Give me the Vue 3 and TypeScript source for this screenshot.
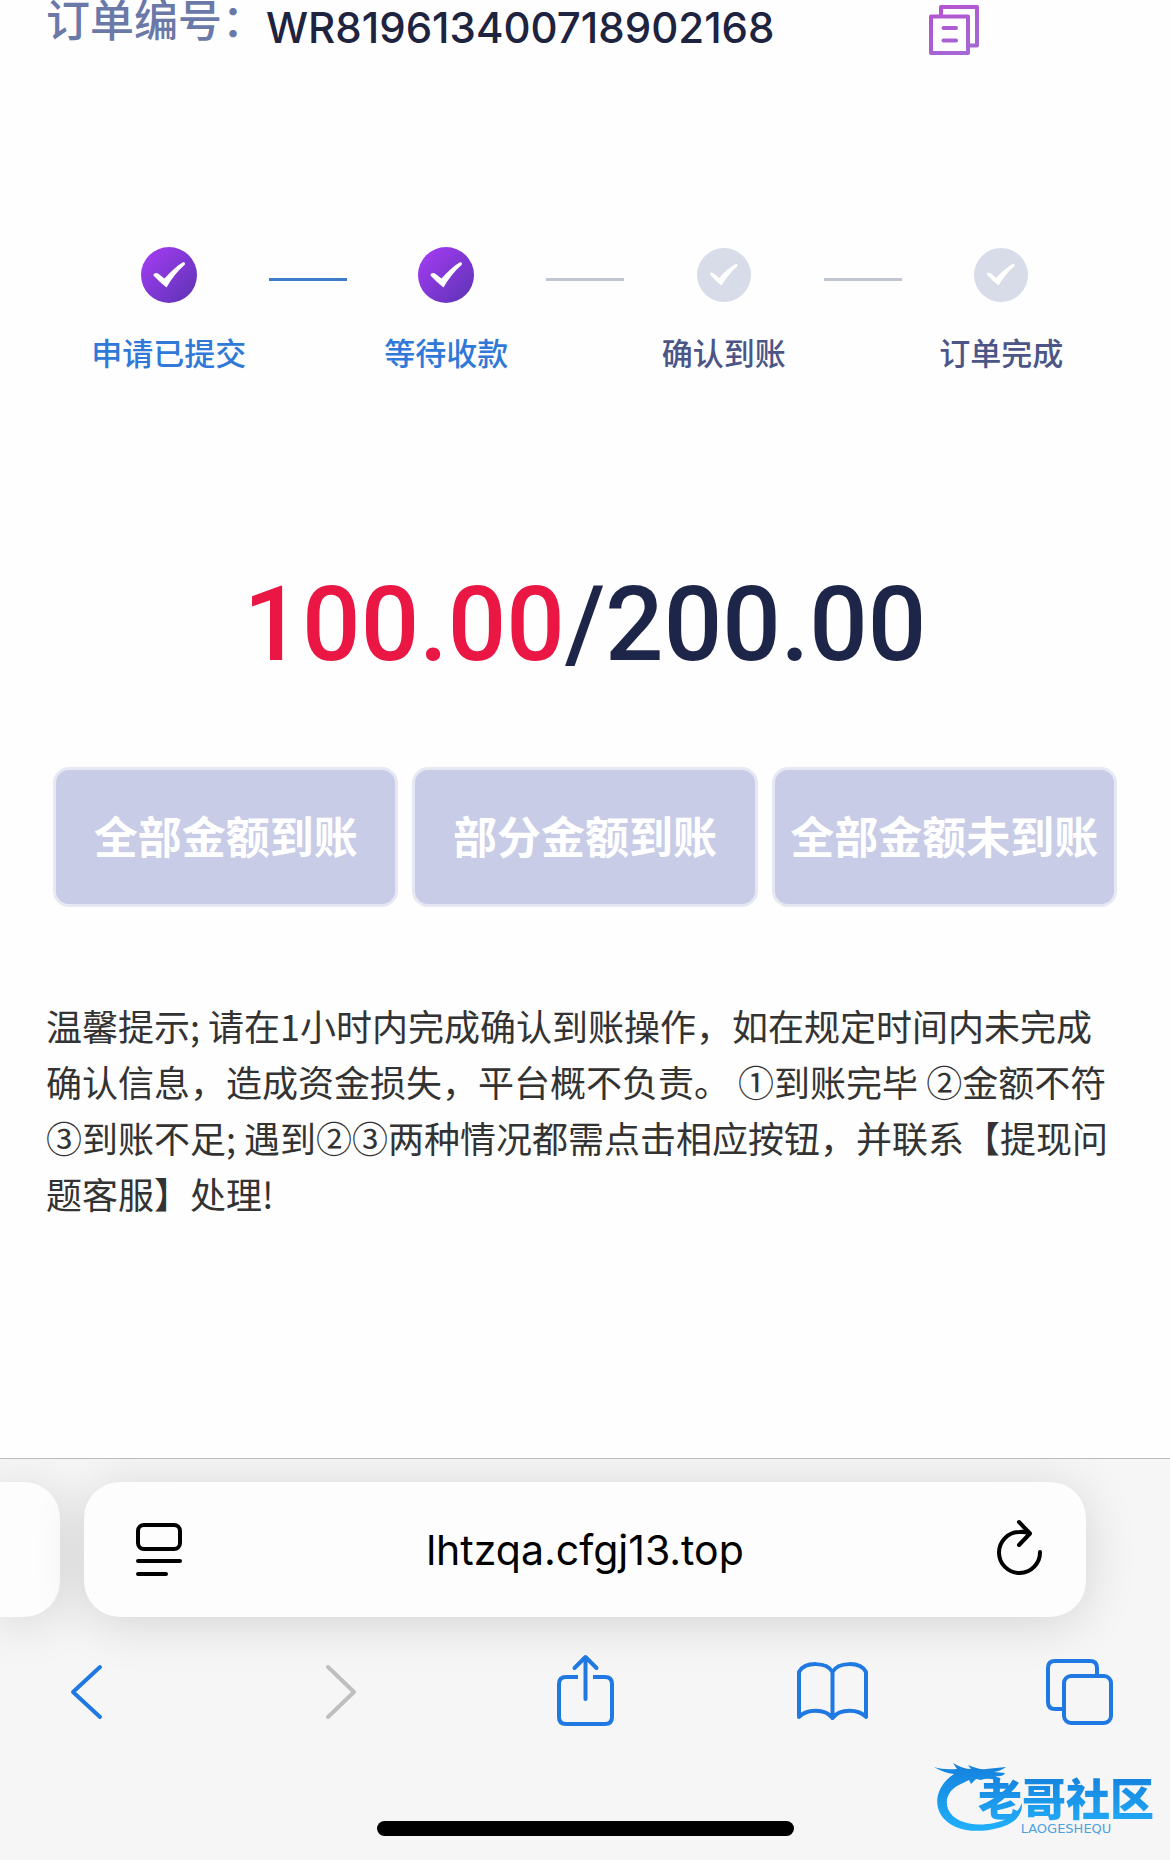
<script setup lang="ts">
import { ref } from 'vue'

interface Step {
  label: string
  done: boolean
}

const orderNo = 'WR819613400718902168'
const received = '100.00'
const total = '200.00'
const address = ref('lhtzqa.cfgj13.top')

const steps: Step[] = [
  { label: '申请已提交', done: true },
  { label: '等待收款', done: true },
  { label: '确认到账', done: false },
  { label: '订单完成', done: false },
]

const actions: string[] = ['全部金额到账', '部分金额到账', '全部金额未到账']
</script>

<template>
  <div class="screen">
    <main class="order">
      <header class="order-head">
        <span class="order-label">订单编号：</span>
        <span class="order-no">{{ orderNo }}</span>
        <button class="icon-btn copy" type="button" aria-label="复制订单编号">
          <svg width="50" height="50" viewBox="0 0 50 50" fill="none" stroke="url(#copyInk)" stroke-width="4" stroke-linejoin="round">
            <defs>
              <linearGradient id="copyInk" gradientUnits="userSpaceOnUse" x1="0" y1="0" x2="30" y2="50">
                <stop offset="0" stop-color="#b750d0" />
                <stop offset="1" stop-color="#a468d4" />
              </linearGradient>
            </defs>
            <path d="M2 11.500h37v36.500h-37z" />
            <path d="M12 11V2h36v38.500h-8" />
            <path d="M14.500 23h12.500M14.500 35.500h12.500" stroke-linecap="round" />
          </svg>
        </button>
      </header>

      <ol class="steps">
        <li v-for="step in steps" :key="step.label" class="step" :class="{ done: step.done }">
          <svg class="step-mark" width="56" height="56" viewBox="0 0 56 56">
            <defs>
              <linearGradient id="stepDone" x1="0.15" y1="0.15" x2="0.85" y2="0.85">
                <stop offset="0" stop-color="#9c3bec" />
                <stop offset="1" stop-color="#6634bd" />
              </linearGradient>
            </defs>
            <circle cx="28" cy="28" :r="step.done ? 28 : 27" :fill="step.done ? 'url(#stepDone)' : '#d8dce9'" />
            <path
              v-if="step.done"
              d="M12.500 28.500C12 26.500 15 25 17 26.500L23.500 31.500C29 25.500 35 19.500 41.500 15.500C43.500 14.500 45 16.500 43.500 18C36 24.500 30.500 32 25.500 40.500Q19 35.500 12.500 28.500Z"
              fill="#fff"
            />
            <path
              v-else
              d="M14 27.500C13.500 25.500 16 25 18 26.500L23 31C28 25.500 33.500 20.500 39.500 17C41.500 16.500 42.500 18 41 19.500C35 24.500 30 31.500 25.500 38.500Q19.500 34 14 27.500Z"
              fill="#fff"
            />
          </svg>
          <span class="step-label">{{ step.label }}</span>
        </li>
      </ol>

      <p class="amount">
        <span class="received">{{ received }}</span><span>/{{ total }}</span>
      </p>

      <div class="actions">
        <button v-for="action in actions" :key="action" class="action" type="button">{{ action }}</button>
      </div>

      <p class="notice">
        温馨提示; 请在1小时内完成确认到账操作，如在规定时间内未完成确认信息，造成资金损失，平台概不负责。 ①到账完毕 ②金额不符 ③到账不足; 遇到②③两种情况都需点击相应按钮，并联系【提现问题客服】处理!
      </p>
    </main>

    <footer class="browser">
      <div class="tabs">
        <div class="prev-tab"></div>
        <div class="address">
          <button class="icon-btn" type="button" aria-label="页面设置">
            <svg width="46" height="56" viewBox="0 0 46 56" fill="none" stroke="#000" stroke-width="4" stroke-linecap="round">
              <rect x="2" y="3" width="42" height="24" rx="6" />
              <path d="M2 39h42M2 52h28" />
            </svg>
          </button>
          <input v-model="address" class="url" type="text" aria-label="网址" />
          <button class="icon-btn" type="button" aria-label="重新载入">
            <svg class="reload" width="46" height="56" viewBox="0 0 46 56" fill="none" stroke="#000" stroke-width="4" stroke-linecap="round" stroke-linejoin="round">
              <path d="M44 30A20.500 20.500 0 1 1 23.500 10Q28 9.500 33 11" />
              <path d="M23 0L34 11.500L23 23" />
            </svg>
          </button>
        </div>
      </div>

      <nav class="toolbar" aria-label="浏览器工具栏">
        <button class="icon-btn tool" type="button" aria-label="后退">
          <svg width="80" height="76" viewBox="0 0 80 76"><path d="M53 13L26 38L53 63" /></svg>
        </button>
        <button class="icon-btn tool off" type="button" aria-label="前进" disabled>
          <svg width="80" height="76" viewBox="0 0 80 76"><path d="M33 13L59 38L33 63" /></svg>
        </button>
        <button class="icon-btn tool" type="button" aria-label="共享">
          <svg width="80" height="76" viewBox="0 0 80 76">
            <path d="M34 23H22Q15 23 15 30V63Q15 70 22 70H61Q68 70 68 63V30Q68 23 61 23H49" stroke-linecap="butt" />
            <path d="M41.500 45V3M30.500 14L41.500 3L52.500 14" />
          </svg>
        </button>
        <button class="icon-btn tool" type="button" aria-label="书签">
          <svg width="80" height="76" viewBox="0 0 80 76">
            <path d="M40.500 18C35 8 13 7 7 18V63C14 55 33 54 40.500 64C48 54 67 55 74 63V18C68 7 46 8 40.500 18ZM40.500 18V64" />
          </svg>
        </button>
        <button class="icon-btn tool" type="button" aria-label="标签页">
          <svg width="80" height="76" viewBox="0 0 80 76">
            <rect x="24" y="22" width="47" height="47" rx="7" />
            <path d="M57 22V14Q57 7 50 7H15Q8 7 8 14V48Q8 55 15 55H24" stroke-linecap="butt" />
          </svg>
        </button>
      </nav>

      <div class="home-bar"></div>

      <div class="mark">
        <svg class="dragon" width="96" height="72" viewBox="0 0 96 72">
          <defs>
            <linearGradient id="dragonInk" x1="0" y1="0" x2="0" y2="1">
              <stop offset="0" stop-color="#1580dc" />
              <stop offset="1" stop-color="#20b0fa" />
            </linearGradient>
          </defs>
          <path
            fill="url(#dragonInk)"
            d="M0 4Q9 7 23 6L19 0Q29 6 37 6L34 2Q45 7 52 6L72 4Q67 8 60 9L71 10Q69 14 61 13L67 16L64 18Q54 14 47 17L42 16L37 21L35 17L29 20C16 25 10 35 14 46C20 60 40 64 60 60C75 57 84 50 88 40C89 52 80 61 64 65C42 71 17 68 7 52C-2 37 6 20 20 11Q10 10 0 4Z"
          />
        </svg>
        <div class="mark-text">
          <span class="mark-name">老哥社区</span>
          <span class="mark-latin">LAOGESHEQU</span>
        </div>
      </div>
    </footer>
  </div>
</template>

<style>
body {
  margin: 0;
  background: #fefefe;
}
</style>

<style scoped>
.screen {
  display: flex;
  flex-direction: column;
  min-height: 100vh;
  overflow: hidden;
  font-family: 'Noto Sans CJK SC', sans-serif;
}

.order {
  flex: 1;
  padding: 0 46px;
}

.order-head {
  display: grid;
  grid-template-columns: auto 1fr auto;
  align-items: start;
  padding-right: 145px;
}

.order-label {
  font-size: 44px;
  font-weight: 500;
  line-height: 36px;
  color: #6a79a8;
}

.order-no {
  padding-top: 4px;
  font-family: Inter, sans-serif;
  font-size: 42px;
  font-weight: 500;
  line-height: 48px;
  color: #1e2340;
}

.icon-btn {
  display: flex;
  padding: 0;
  border: 0;
  background: none;
}

.copy {
  padding-top: 5px;
}

.steps {
  display: grid;
  grid-template-columns: repeat(4, 1fr);
  margin: 192px -16px 0;
  padding: 0;
  list-style: none;
}

.step {
  position: relative;
  display: flex;
  flex-direction: column;
  align-items: center;
  gap: 27px;
  color: #4b5687;
}

.step.done {
  color: #3079d9;
}

.step + .step::before {
  content: '';
  position: absolute;
  top: 31px;
  left: 0;
  width: 78px;
  height: 3px;
  background: #c0c5d2;
  transform: translateX(-50%);
}

.step.done + .step.done::before {
  background: #3e7cc9;
}

.step-label {
  font-size: 31px;
  font-weight: 500;
  line-height: 44px;
}

.amount {
  margin: 191px 0 0;
  font-family: Roboto, sans-serif;
  font-size: 103px;
  font-weight: 500;
  line-height: 120px;
  text-align: center;
  color: #1d2548;
}

.received {
  color: #ea1744;
}

.actions {
  display: grid;
  grid-template-columns: repeat(3, 1fr);
  gap: 14px;
  margin: 82px 7px 0;
}

.action {
  height: 140px;
  padding: 0 0 4px;
  border: 3px solid #e6e9f3;
  border-radius: 16px;
  background: #c8cce6;
  font-family: inherit;
  font-size: 44px;
  font-weight: 700;
  white-space: nowrap;
  color: #fff;
}

.notice {
  margin: 90px 0 0;
  font-size: 36px;
  line-height: 56px;
  color: #333;
}

.browser {
  position: relative;
  overflow: hidden;
  border-top: 1px solid #bbb;
  background: #f6f6f6;
}

.tabs {
  display: grid;
  grid-template-columns: 60px 1fr;
  gap: 24px;
  padding: 23px 84px 0 0;
}

.prev-tab,
.address {
  height: 135px;
  background: #fdfdfd;
  box-shadow: 0 6px 52px rgba(0, 0, 0, 0.14);
}

.prev-tab {
  border-radius: 0 36px 36px 0;
}

.address {
  display: flex;
  align-items: center;
  box-sizing: border-box;
  padding: 0 44px 0 52px;
  border-radius: 36px;
}

.reload {
  overflow: visible;
}

.url {
  flex: 1;
  min-width: 0;
  padding: 0 8px 0 0;
  border: 0;
  background: none;
  font-family: Inter, sans-serif;
  font-size: 41px;
  text-align: center;
  color: #000;
}

.toolbar {
  display: flex;
  justify-content: space-between;
  padding: 37px 50px 0 47px;
}

.tool {
  color: #2079e2;
}

.tool.off {
  color: #bfbfbf;
}

.tool svg {
  fill: none;
  stroke: currentColor;
  stroke-width: 4;
  stroke-linecap: round;
  stroke-linejoin: round;
}

.home-bar {
  width: 417px;
  height: 15px;
  margin: 91px auto 24px;
  border-radius: 8px;
  background: #000;
}

.mark {
  position: absolute;
  right: 16px;
  bottom: 23px;
  display: flex;
}

.mark-text {
  display: flex;
  flex-direction: column;
  align-items: center;
  padding-top: 10px;
  margin-left: -52px;
}

.mark-name {
  background: linear-gradient(#1580dc, #20a8f5);
  background-clip: text;
  font-size: 44px;
  font-weight: 900;
  line-height: 48px;
  color: transparent;
}

.mark-latin {
  font-family: 'DejaVu Sans', sans-serif;
  font-size: 13px;
  line-height: 16px;
  color: #4ba3df;
}
</style>
